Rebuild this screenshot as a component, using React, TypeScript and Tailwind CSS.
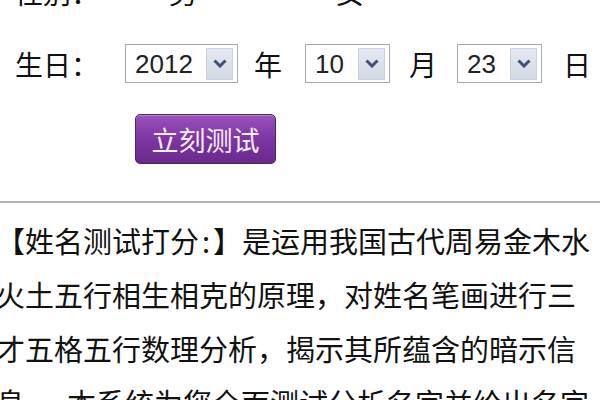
import React from "react";

const CJK = { fontFamily: '"Noto Sans CJK SC", "Noto Sans", sans-serif' };
const LAT = { fontFamily: '"Liberation Sans", Arial, sans-serif' };

function Chevron() {
  return (
    <svg width="14" height="9" viewBox="0 0 14 9">
      <path d="M1.5 1.5 L7 7 L12.5 1.5" fill="none" stroke="#3f5175" strokeWidth="3" strokeLinejoin="miter" />
    </svg>
  );
}

function Select({ value, width }: { value: string; width: string }) {
  return (
    <div className={`flex h-[39px] items-center justify-between border border-[#a9a9a9] bg-white pl-[9px] pr-[4px] ${width}`}>
      <span className="text-[26px] leading-none text-[#222]" style={LAT}>
        {value}
      </span>
      <div className="flex h-[32px] w-[27px] items-center justify-center border border-[#c9d1de] bg-gradient-to-b from-[#e4e9f2] to-[#d2d9e6]">
        <Chevron />
      </div>
    </div>
  );
}

export default function App() {
  return (
    <div className="h-[400px] w-[600px] overflow-hidden bg-white text-[#111]" style={CJK}>
      {/* partially visible row above */}
      <div className="relative -mt-[22px] flex h-[28px] items-center text-[28px] leading-[28px]">
        <span className="ml-[15px]">性别：</span>
        <span className="ml-[70px]">男</span>
        <span className="ml-[139px]">女</span>
      </div>

      {/* birthday row */}
      <div className="mt-[38px] flex h-[39px] items-center text-[28px] leading-none">
        <span className="ml-[15px] w-[110px]">生日：</span>
        <Select value="2012" width="w-[113px]" />
        <span className="ml-[16px]">年</span>
        <div className="ml-[23px]">
          <Select value="10" width="w-[85px]" />
        </div>
        <span className="ml-[19px]">月</span>
        <div className="ml-[20px]">
          <Select value="23" width="w-[85px]" />
        </div>
        <span className="ml-[21px]">日</span>
      </div>

      {/* button */}
      <div className="mt-[31px] pl-[135px]">
        <button className="flex h-[50px] w-[141px] items-center justify-center rounded-[5px] border border-[#4b2760] bg-gradient-to-b from-[#9a52bd] via-[#7d35a3] to-[#6a2a8d] text-[27px] leading-none text-[#fbeefb] shadow-[inset_0_1px_0_rgba(255,255,255,0.3)]">
          立刻测试
        </button>
      </div>

      {/* divider */}
      <div className="mt-[37px] h-[2px] w-full bg-[#b4b4b4]" />

      {/* paragraph */}
      <div className="-ml-[4px] mt-[10px] whitespace-nowrap text-[29px] leading-[54px] text-[#111]">
        <div>
          【姓名测试打分<span className="inline-block w-[14px] text-center">:</span>】是运用我国古代周易金木水
        </div>
        <div>火土五行相生相克的原理，对姓名笔画进行三</div>
        <div>才五格五行数理分析，揭示其所蕴含的暗示信</div>
        <div>
          息。<span className="inline-block w-[13px]"></span>本系统为您全面测试分析名字并给出名字
        </div>
      </div>
    </div>
  );
}
